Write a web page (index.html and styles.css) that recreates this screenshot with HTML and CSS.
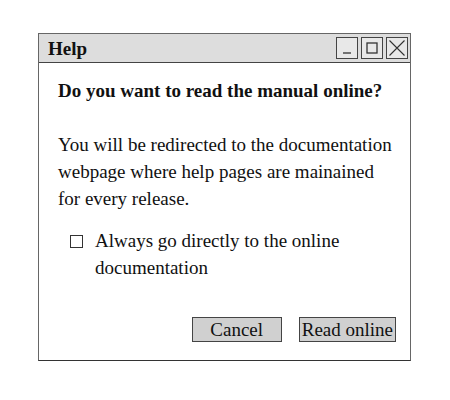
FILE: index.html
```html
<!DOCTYPE html>
<html>
<head>
<meta charset="utf-8">
<link rel="stylesheet" href="styles.css">
</head>
<body>
<div class="window">
  <div class="titlebar">
    <span class="title">Help</span>
    <div class="controls">
      <span class="ctl"><svg width="20" height="20" viewBox="0 0 20 20"><line x1="6" y1="15" x2="14" y2="15" stroke="#333" stroke-width="1.3"/></svg></span>
      <span class="ctl"><svg width="20" height="20" viewBox="0 0 20 20"><rect x="5" y="5" width="10" height="10" fill="none" stroke="#333" stroke-width="1.3"/></svg></span>
      <span class="ctl"><svg width="20" height="20" viewBox="0 0 20 20"><path d="M2.5 2.5 L17.5 17.5 M17.5 2.5 L2.5 17.5" stroke="#333" stroke-width="1.1"/></svg></span>
    </div>
  </div>
  <div class="content">
    <p class="question">Do you want to read the manual online?</p>
    <p class="desc">You will be redirected to the documentation webpage where help pages are mainained for every release.</p>
    <div class="check">
      <span class="box"></span>
      <span class="label">Always go directly to the online documentation</span>
    </div>
    <div class="actions">
      <span class="btn cancel">Cancel</span>
      <span class="btn">Read online</span>
    </div>
  </div>
</div>
</body>
</html>
```

FILE: styles.css
```css
html, body {
  margin: 0;
  padding: 0;
  background: #fff;
}
body {
  font-family: "Liberation Serif", "Times New Roman", serif;
  color: #111;
  font-size: 19px;
}
.window {
  margin: 33px 0 0 38px;
  width: 373px;
  height: 328px;
  box-sizing: border-box;
  border: 1.5px solid #666;
  border-bottom-color: #333;
  display: flex;
  flex-direction: column;
}
.titlebar {
  height: 29px;
  background: #dddddd;
  border-bottom: 1.5px solid #444;
  display: flex;
  align-items: center;
  justify-content: space-between;
  padding: 0 2px 0 9px;
  box-sizing: border-box;
  flex: none;
}
.title {
  font-weight: bold;
  font-size: 19px;
  line-height: 27px;
}
.controls {
  display: flex;
  gap: 3px;
}
.ctl {
  width: 20px;
  height: 20px;
  border: 1px solid #444;
  background: #e8e8e8;
  display: block;
}
.ctl svg { display: block; }
.content {
  padding: 14px 14px 0 19px;
  display: flex;
  flex-direction: column;
  flex: 1;
}
p {
  margin: 0;
  line-height: 27px;
}
.question {
  font-weight: bold;
  margin-bottom: 27px;
}
.desc {
  margin-bottom: 15px;
}
.check {
  display: flex;
  align-items: flex-start;
  padding-left: 12px;
  line-height: 27px;
}
.box {
  width: 11px;
  height: 11px;
  border: 1.3px solid #333;
  margin-top: 8px;
  margin-right: 12px;
  flex: none;
}
.actions {
  margin-top: auto;
  margin-bottom: 18px;
  display: flex;
  justify-content: flex-end;
  gap: 17px;
}
.btn {
  height: 25px;
  box-sizing: border-box;
  border: 1.3px solid #444;
  background: #d0d0d0;
  line-height: 23px;
  padding: 0 2px;
  text-align: center;
}
.btn.cancel {
  width: 90px;
}
```
